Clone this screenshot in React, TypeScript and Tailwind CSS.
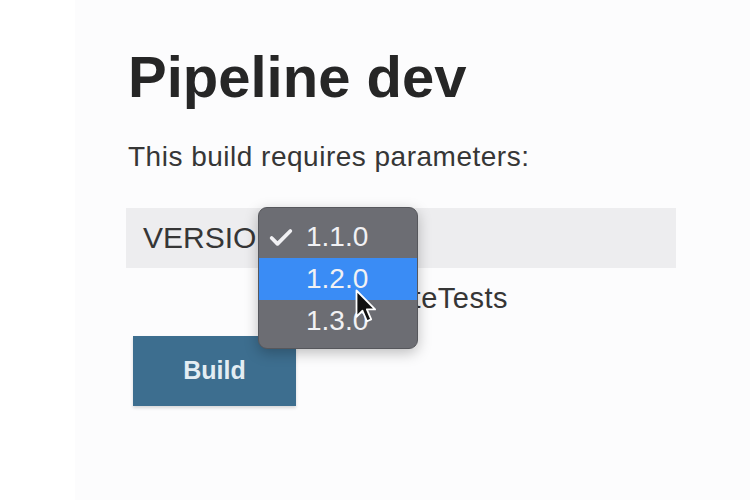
import { Check } from 'lucide-react';

function Cursor() {
  return (
    <svg width="24" height="36" viewBox="0 0 16 24" className="absolute left-[355px] top-[289px]">
      <path
        d="M1 1 L1 18.5 L5 14.5 L8 21.5 L10.8 20.3 L7.9 13.6 L13.4 13.6 Z"
        fill="#111"
        stroke="#fff"
        strokeWidth="1.2"
        strokeLinejoin="round"
      />
    </svg>
  );
}

function VersionMenu() {
  const options = ['1.1.0', '1.2.0', '1.3.0'];
  return (
    <div className="absolute left-[258px] top-[207px] w-[160px] pt-[8px] pb-[6px] rounded-[9px] bg-[#6c6d73] border border-[#56575c] shadow-[0_4px_14px_rgba(0,0,0,0.25)]">
      {options.map((v, i) => (
        <div
          key={v}
          className={`relative h-[42px] flex items-center pl-[47px] text-[28px] leading-none text-[#f1f1f4] ${i === 1 ? 'bg-[#3a8cf5]' : ''}`}
        >
          {i === 0 && <Check className="absolute left-[8px] top-[8px] w-[28px] h-[28px]" strokeWidth={3.2} />}
          {v}
        </div>
      ))}
    </div>
  );
}

export default function App() {
  return (
    <div className="relative w-[750px] h-[500px] flex overflow-hidden font-['Liberation_Sans',Arial,sans-serif]">
      <div className="w-[75px] bg-white" />
      <div className="flex-1 bg-[#fcfcfd] pl-[53px]">
        <h1 className="mt-[48px] text-[58px] leading-none font-bold text-[#262626]">
          Pipeline dev
        </h1>
        <p className="mt-[37px] text-[28px] leading-none tracking-[0.5px] text-[#363636]">
          This build requires parameters:
        </p>

        <div className="mt-[37px] -ml-[2px] w-[550px] h-[60px] bg-[#ededef] flex items-center pl-[17px]">
          <span className="text-[30px] leading-none text-[#363636]">VERSION</span>
        </div>

        <div className="mt-[16px] h-[29px] w-[380px] flex items-center justify-end gap-[10px]">
          <input type="checkbox" className="w-[20px] h-[20px]" />
          <span className="text-[29px] leading-none tracking-[0.5px] text-[#363636]">executeTests</span>
        </div>

        <button className="mt-[23px] ml-[5px] w-[163px] h-[70px] bg-[#3d6e8f] text-[#e3edf3] text-[25px] font-bold shadow-[0_2px_3px_rgba(0,0,0,0.15)]">
          Build
        </button>
      </div>

      <VersionMenu />
      <Cursor />
    </div>
  );
}
